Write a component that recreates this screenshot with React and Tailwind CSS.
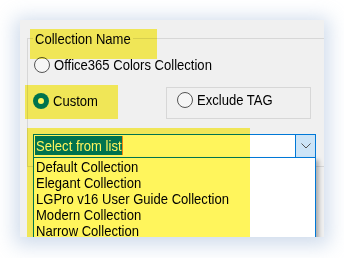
import React from "react";

const txt =
  "block origin-left scale-x-[0.87] text-[15px] leading-[16px] whitespace-nowrap";

function Radio({ checked }) {
  if (checked) {
    return (
      <div className="w-[16px] h-[16px] rounded-full bg-[#0078d4] flex items-center justify-center shrink-0">
        <div className="w-[6px] h-[6px] rounded-full bg-white" />
      </div>
    );
  }
  return (
    <div className="w-[16px] h-[16px] rounded-full border border-[#555555] bg-[#f6f6f6] shrink-0" />
  );
}

const items = [
  "Default Collection",
  "Elegant Collection",
  "LGPro v16 User Guide Collection",
  "Modern Collection",
  "Narrow Collection",
];

export default function App() {
  return (
    <div
      className="w-[344px] h-[258px] bg-white pt-[20px] pl-[20px] text-black"
      style={{ fontFamily: '"Liberation Sans", Arial, sans-serif' }}
    >
      <div className="relative w-[304px] h-[217px] bg-[#f0f0f0] overflow-hidden shadow-[0_3px_18px_5px_rgba(150,178,212,0.45)]">
        {/* group box */}
        <div className="relative mt-[18px] ml-[7px] w-[300px] h-[129px] border-l border-t border-b border-[#d7d7d7] flex flex-col">
          <div className="-mt-[8px] ml-[5px] w-[100px] h-[16px] px-[2px] bg-[#f0f0f0]">
            <span className={txt}>Collection Name</span>
          </div>

          <div className="mt-[10px] ml-[6px] h-[16px] flex items-center gap-[4px]">
            <Radio />
            <span className={txt}>Office365 Colors Collection</span>
          </div>

          <div className="mt-[14px] flex items-start">
            <div className="ml-[5px] mt-[6px] w-[133px] h-[16px] flex items-center gap-[4px]">
              <Radio checked />
              <span className={txt}>Custom</span>
            </div>
            <div className="w-[145px] h-[32px] border border-[#d7d7d7] flex items-start pt-[4px] pl-[10px]">
              <div className="h-[16px] flex items-center gap-[4px]">
                <Radio />
                <span className={txt}>Exclude TAG</span>
              </div>
            </div>
          </div>

          {/* combo */}
          <div className="relative mt-[15px] ml-[5px] w-[283px] h-[24px] border border-[#0078d7] bg-white flex">
            <div className="mt-[1px] ml-[1px] w-[87px] h-[19px] bg-[#0078d7] text-white pl-[1px]">
              <span className="block origin-left scale-x-[0.87] text-[15px] leading-[19px] whitespace-nowrap">
                Select from list
              </span>
            </div>
            <div className="mt-[1px] w-[1px] h-[19px] bg-[#f08a2a]" />
            <div className="flex-1" />
            <div className="w-[20px] h-full border-l border-[#0078d7] bg-[#cce4f7] flex items-center justify-center">
              <svg width="10" height="6" viewBox="0 0 10 6">
                <path d="M0.5 0.5 L5 5 L9.5 0.5" fill="none" stroke="#555" strokeWidth="1" />
              </svg>
            </div>

            {/* dropdown list */}
            <div className="absolute top-[22px] -left-[1px] w-[283px] h-[110px] border border-[#0078d7] bg-white pt-[1px] pl-[2px] shadow-[3px_3px_4px_rgba(0,0,0,0.28)]">
              {items.map((it) => (
                <div key={it} className="h-[16px]">
                  <span className={txt}>{it}</span>
                </div>
              ))}
            </div>
          </div>
        </div>

        {/* yellow highlights */}
        <div className="absolute left-[10px] top-[9px] w-[127px] h-[30px] bg-[#fff55c] mix-blend-multiply pointer-events-none" />
        <div className="absolute left-[5px] top-[65px] w-[93px] h-[34px] bg-[#fff55c] mix-blend-multiply pointer-events-none" />
        <div className="absolute left-[7px] top-[108px] w-[223px] h-[120px] bg-[#fff55c] mix-blend-multiply pointer-events-none" />
      </div>
    </div>
  );
}
